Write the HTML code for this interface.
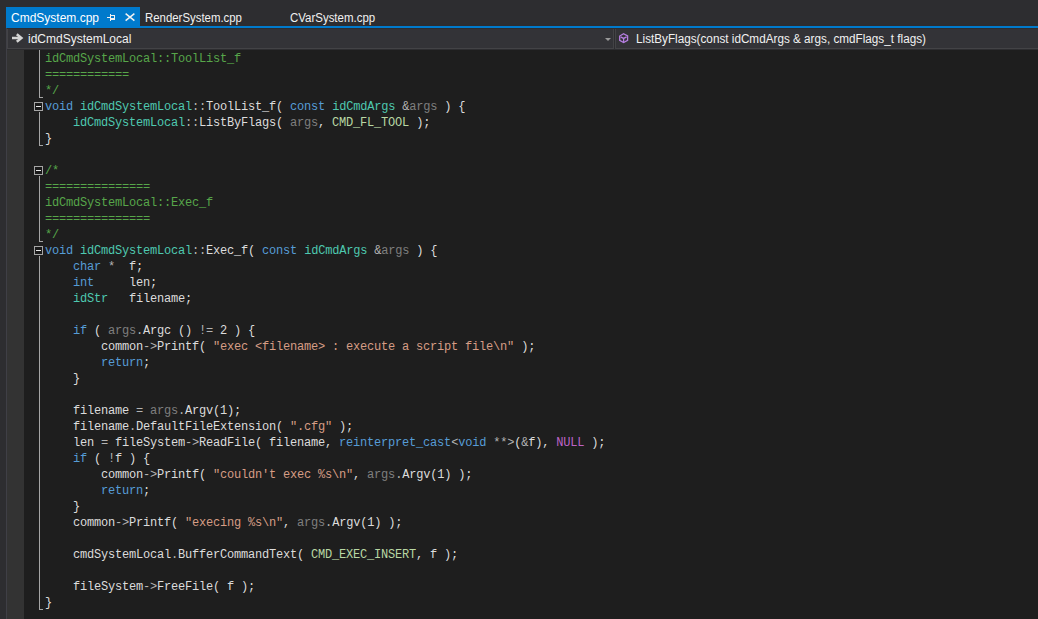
<!DOCTYPE html>
<html><head><meta charset="utf-8">
<style>
html,body{margin:0;padding:0;}
body{width:1038px;height:619px;overflow:hidden;background:#2d2d30;position:relative;font-family:"Liberation Sans",sans-serif;}
.abs{position:absolute;}
.tabtxt{position:absolute;top:10px;font-size:12px;line-height:16px;color:#f1f1f1;white-space:nowrap;transform-origin:0 0;}
#code{position:absolute;left:45px;top:51px;font-family:"Liberation Mono",monospace;font-size:12px;letter-spacing:-0.2px;line-height:16px;color:#dcdcdc;white-space:pre;}
.c{color:#57a64a}.k{color:#569cd6}.t{color:#4ec9b0}.p{color:#7f7f7f}.s{color:#d69d85}.m{color:#bd63c5}.e{color:#b8d7a3}.o{color:#b4b4b4}
svg{position:absolute;left:0;top:0;}
</style></head><body>
<svg width="1038" height="619" viewBox="0 0 1038 619" shape-rendering="crispEdges">
  <!-- active tab -->
  <rect x="6" y="7" width="134" height="19" fill="#007acc"/>
  <rect x="6" y="26" width="1032" height="2" fill="#007acc"/>
  <!-- left combo -->
  <rect x="7" y="29" width="607" height="20" fill="#434346"/>
  <rect x="8" y="29" width="605" height="19" fill="#333337"/>
  <!-- right combo -->
  <rect x="615" y="29" width="423" height="20" fill="#434346"/>
  <rect x="616" y="29" width="422" height="19" fill="#333337"/>
  <!-- left border line -->
  <rect x="6" y="28" width="1" height="591" fill="#3f3f46"/>
  <!-- margin + editor -->
  <rect x="7" y="50" width="17" height="569" fill="#333333"/>
  <rect x="24" y="50" width="1014" height="569" fill="#1e1e1e"/>
</svg>
<!-- icons -->
<svg width="1038" height="619" viewBox="0 0 1038 619">
  <g shape-rendering="crispEdges" fill="#f1f1f1">
    <!-- pin -->
    <rect x="107" y="17" width="3" height="1"/>
    <rect x="110" y="14" width="1" height="7"/>
    <rect x="111" y="15" width="4" height="1"/>
    <rect x="114" y="15" width="1" height="5"/>
    <rect x="111" y="18" width="4" height="2"/>
  </g>
  <!-- close X -->
  <path d="M125.6 13.6 L134.4 20.6 M134.4 13.6 L125.6 20.6" stroke="#f1f1f1" stroke-width="1.5" fill="none"/>
  <!-- nav arrow -->
  <path d="M12 38 H21" stroke="#d4d4d4" stroke-width="2.5" fill="none"/>
  <path d="M16.8 34.2 L21.4 38 L16.8 41.8" stroke="#d4d4d4" stroke-width="2.5" fill="none" stroke-linejoin="miter"/>
  <!-- dropdown triangle -->
  <path d="M605 38 H611 L608 41 Z" fill="#999999"/>
  <!-- cube icon -->
  <g stroke="#b57ee0" stroke-width="1.3" fill="none">
    <path d="M623.6 33.7 L627.6 36 L627.6 40.3 L623.6 42.5 L619.7 40.3 L619.7 36 Z"/>
    <path d="M620.6 36.9 L623.6 38.4 L626.6 36.9 M623.6 38.4 V42.4"/>
  </g>
  <!-- outlining -->
  <g shape-rendering="crispEdges">
    <rect x="39" y="50" width="1" height="48" fill="#a5a5a5"/>
    <rect x="39" y="97" width="4" height="1" fill="#a5a5a5"/>
    <rect x="39" y="112" width="1" height="34" fill="#a5a5a5"/>
    <rect x="39" y="145" width="4" height="1" fill="#a5a5a5"/>
    <rect x="39" y="176" width="1" height="66" fill="#a5a5a5"/>
    <rect x="39" y="241" width="4" height="1" fill="#a5a5a5"/>
    <rect x="39" y="256" width="1" height="354" fill="#a5a5a5"/>
    <rect x="39" y="609" width="4" height="1" fill="#a5a5a5"/>
    <g>
      <rect x="34" y="102" width="9" height="9" fill="#a5a5a5"/><rect x="35" y="103" width="7" height="7" fill="#1a1a1a"/><rect x="36" y="106" width="5" height="1" fill="#e8e8e8"/>
    </g>
    <g>
      <rect x="34" y="166" width="9" height="9" fill="#a5a5a5"/><rect x="35" y="167" width="7" height="7" fill="#1a1a1a"/><rect x="36" y="170" width="5" height="1" fill="#e8e8e8"/>
    </g>
    <g>
      <rect x="34" y="246" width="9" height="9" fill="#a5a5a5"/><rect x="35" y="247" width="7" height="7" fill="#1a1a1a"/><rect x="36" y="250" width="5" height="1" fill="#e8e8e8"/>
    </g>
  </g>
</svg>
<div class="tabtxt" style="left:11px;color:#fff">CmdSystem.cpp</div>
<div class="tabtxt" style="left:145px;transform:scaleX(0.95)">RenderSystem.cpp</div>
<div class="tabtxt" style="left:290px;transform:scaleX(0.955)">CVarSystem.cpp</div>
<div class="tabtxt" style="left:28px;top:31px">idCmdSystemLocal</div>
<div class="tabtxt" style="left:636px;top:31px;transform:scaleX(0.977)">ListByFlags(const idCmdArgs &amp; args, cmdFlags_t flags)</div>
<div id="code"><span class="c">idCmdSystemLocal::ToolList_f
============
*/</span>
<span class="k">void</span> <span class="t">idCmdSystemLocal</span><span class="o">::</span>ToolList_f( <span class="k">const</span> <span class="t">idCmdArgs</span> <span class="o">&amp;</span><span class="p">args</span> ) {
    <span class="t">idCmdSystemLocal</span><span class="o">::</span>ListByFlags( <span class="p">args</span>, <span class="e">CMD_FL_TOOL</span> );
}

<span class="c">/*
===============
idCmdSystemLocal::Exec_f
===============
*/</span>
<span class="k">void</span> <span class="t">idCmdSystemLocal</span><span class="o">::</span>Exec_f( <span class="k">const</span> <span class="t">idCmdArgs</span> <span class="o">&amp;</span><span class="p">args</span> ) {
    <span class="k">char</span> <span class="o">*</span>  f;
    <span class="k">int</span>     len;
    <span class="t">idStr</span>   filename;

    <span class="k">if</span> ( <span class="p">args</span><span class="o">.</span>Argc () <span class="o">!=</span> 2 ) {
        common<span class="o">-&gt;</span>Printf( <span class="s">"exec &lt;filename&gt; : execute a script file\n"</span> );
        <span class="k">return</span>;
    }

    filename <span class="o">=</span> <span class="p">args</span><span class="o">.</span>Argv(1);
    filename<span class="o">.</span>DefaultFileExtension( <span class="s">".cfg"</span> );
    len <span class="o">=</span> fileSystem<span class="o">-&gt;</span>ReadFile( filename, <span class="k">reinterpret_cast</span><span class="o">&lt;</span><span class="k">void</span> <span class="o">**</span><span class="o">&gt;</span>(<span class="o">&amp;</span>f), <span class="m">NULL</span> );
    <span class="k">if</span> ( <span class="o">!</span>f ) {
        common<span class="o">-&gt;</span>Printf( <span class="s">"couldn't exec %s\n"</span>, <span class="p">args</span><span class="o">.</span>Argv(1) );
        <span class="k">return</span>;
    }
    common<span class="o">-&gt;</span>Printf( <span class="s">"execing %s\n"</span>, <span class="p">args</span><span class="o">.</span>Argv(1) );

    cmdSystemLocal<span class="o">.</span>BufferCommandText( <span class="e">CMD_EXEC_INSERT</span>, f );

    fileSystem<span class="o">-&gt;</span>FreeFile( f );
}
</div>
</body></html>
